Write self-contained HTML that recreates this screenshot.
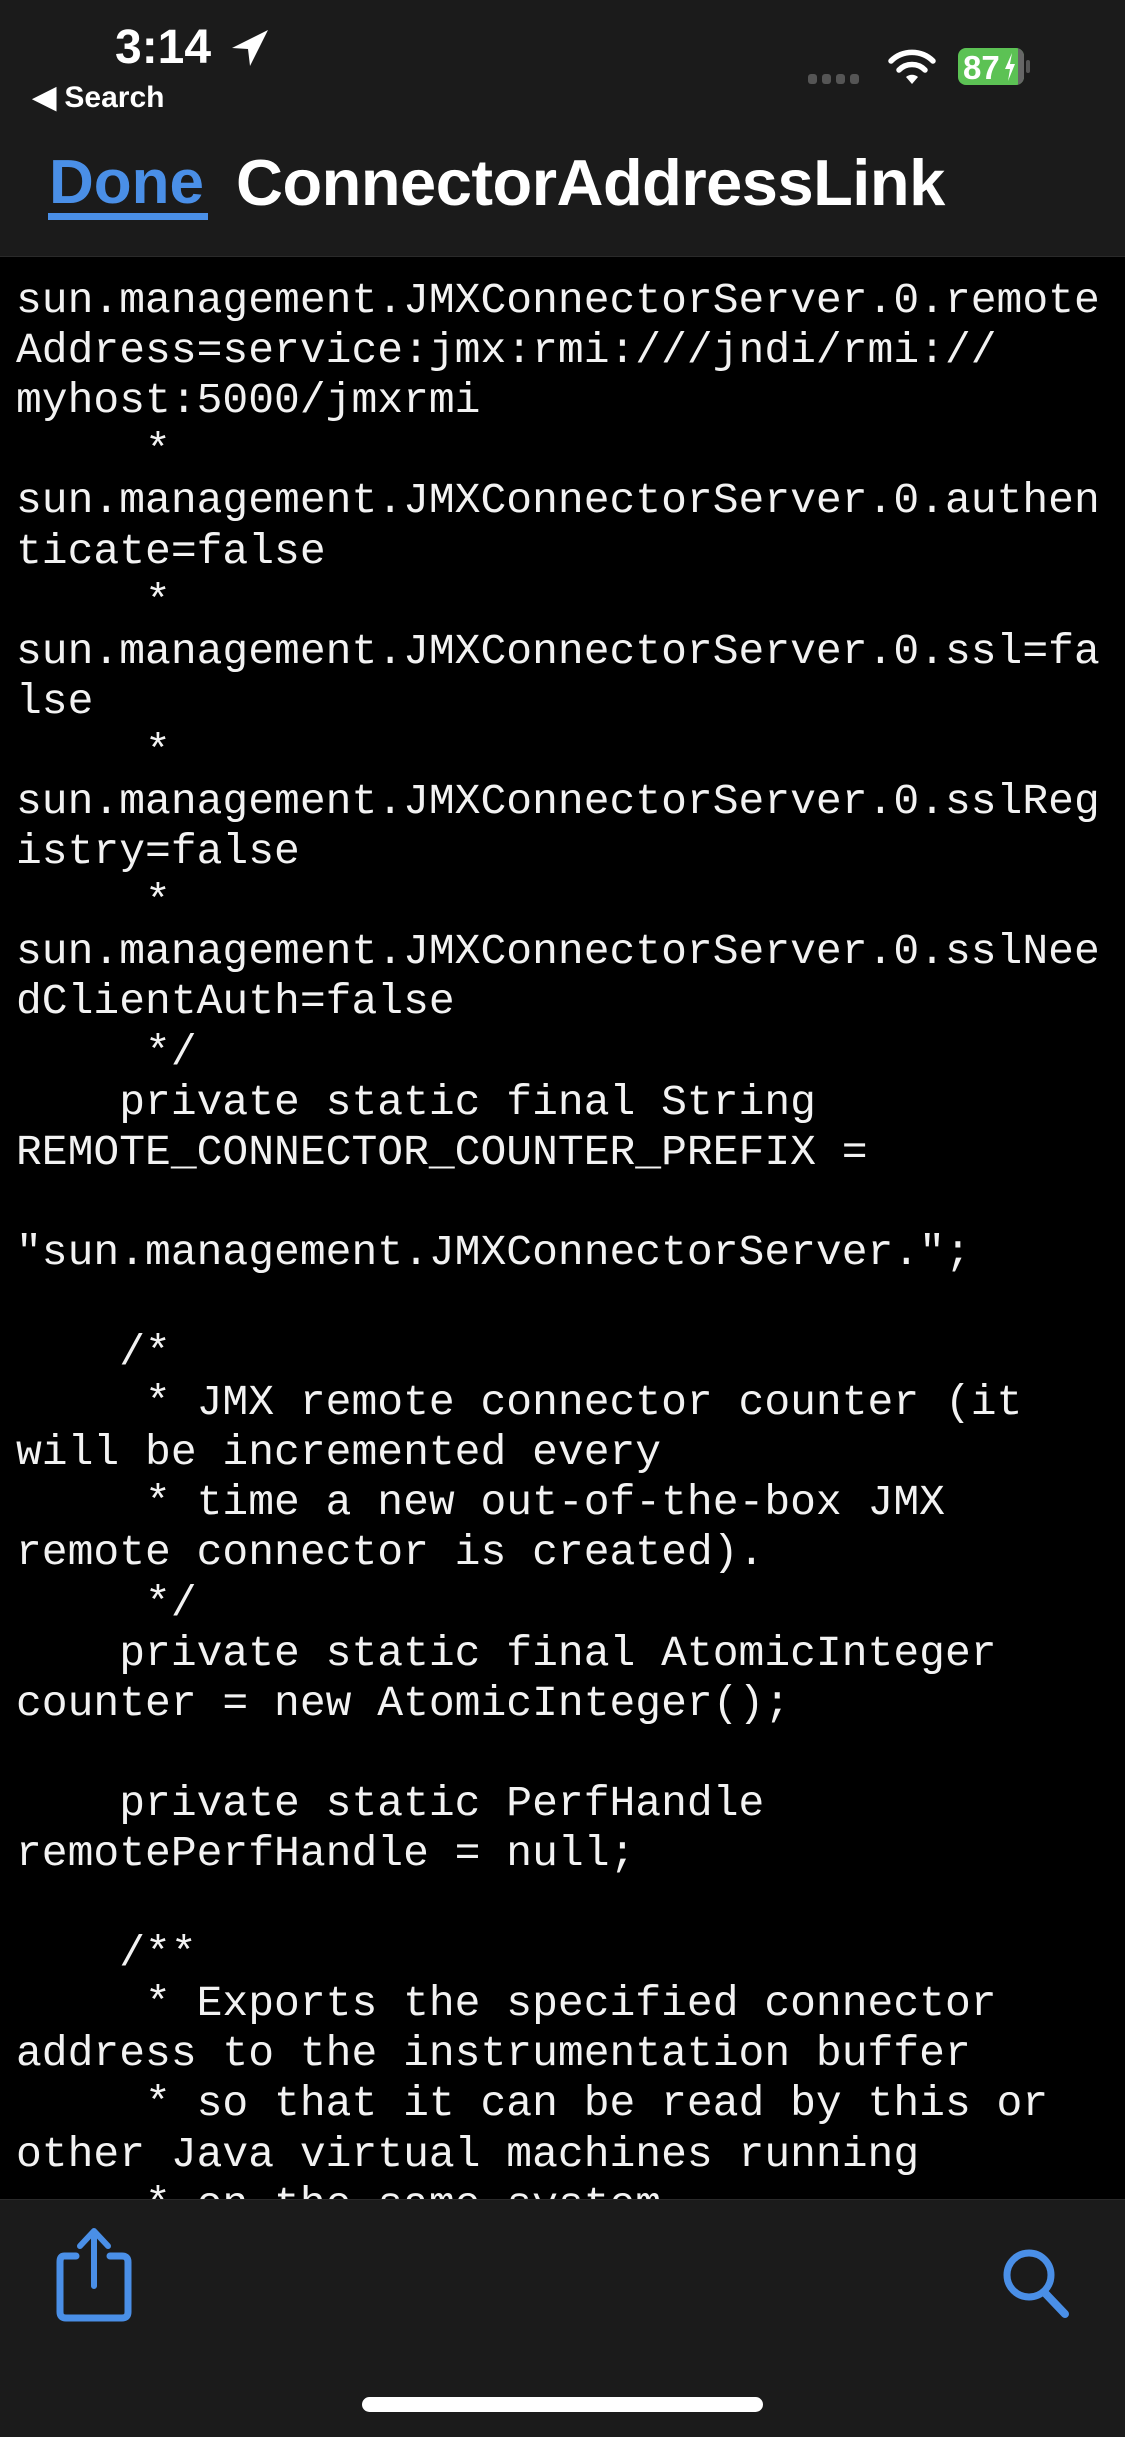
<!DOCTYPE html>
<html><head><meta charset="utf-8">
<style>
html,body{margin:0;padding:0;background:#000;}
body{width:1125px;height:2436px;position:relative;overflow:hidden;font-family:"Liberation Sans",sans-serif;}
#code{position:absolute;left:16px;top:226px;margin:0;font-family:"Liberation Mono",monospace;font-size:43px;line-height:50.1px;color:#f2f2f2;white-space:pre;}
#nav{position:absolute;left:0;top:0;width:1125px;height:256px;background:#1b1b1b;border-bottom:1px solid #2a2a2a;}
#tb{position:absolute;left:0;top:2199px;width:1125px;height:237px;background:#1b1b1b;border-top:1px solid #2a2a2a;}
.time{position:absolute;left:115px;top:20px;font-size:48px;font-weight:bold;color:#fff;}
.search{position:absolute;left:33px;top:80px;font-size:30px;font-weight:bold;color:#fff;}
.done{position:absolute;left:49px;top:147px;font-size:62px;font-weight:bold;color:#4a8fe7;}
.uline{position:absolute;left:48px;top:213px;width:160px;height:7px;background:#4a8fe7;}
.title{position:absolute;left:236px;top:145px;font-size:65px;font-weight:bold;color:#fff;letter-spacing:-0.5px;}
.home{position:absolute;left:362px;top:2397px;width:401px;height:15px;border-radius:8px;background:#fff;}
</style></head><body>
<pre id="code">     *
sun.management.JMXConnectorServer.0.remote
Address=service:jmx:rmi:///jndi/rmi://
myhost:5000/jmxrmi
     *
sun.management.JMXConnectorServer.0.authen
ticate=false
     *
sun.management.JMXConnectorServer.0.ssl=fa
lse
     *
sun.management.JMXConnectorServer.0.sslReg
istry=false
     *
sun.management.JMXConnectorServer.0.sslNee
dClientAuth=false
     */
    private static final String
REMOTE_CONNECTOR_COUNTER_PREFIX =

"sun.management.JMXConnectorServer.";

    /*
     * JMX remote connector counter (it
will be incremented every
     * time a new out-of-the-box JMX
remote connector is created).
     */
    private static final AtomicInteger
counter = new AtomicInteger();

    private static PerfHandle
remotePerfHandle = null;

    /**
     * Exports the specified connector
address to the instrumentation buffer
     * so that it can be read by this or
other Java virtual machines running
     * on the same system.</pre>
<div id="nav">
  <div class="time">3:14</div>
  <svg style="position:absolute;left:228px;top:28px" width="44" height="40" viewBox="0 0 44 40"><path d="M40 2 L4 20 L20 21 L22 38 Z" fill="#fff"/></svg>
  <div class="search">&#9664;&#xFE0E; <span style="font-size:30px">Search</span></div>
  <svg style="position:absolute;left:808px;top:72px" width="56" height="14"><g fill="#555"><rect x="0" y="2" width="9" height="10" rx="3"/><rect x="14" y="2" width="9" height="10" rx="3"/><rect x="28" y="2" width="9" height="10" rx="3"/><rect x="42" y="2" width="9" height="10" rx="3"/></g></svg>
  <svg style="position:absolute;left:886px;top:46px" width="52" height="40" viewBox="0 0 52 40"><path d="M26 38 L20 31 A9 9 0 0 1 32 31 Z" fill="#fff"/><path d="M13 24 A18 18 0 0 1 39 24" stroke="#fff" stroke-width="5.5" fill="none" stroke-linecap="round"/><path d="M5 15 A30 30 0 0 1 47 15" stroke="#fff" stroke-width="5.5" fill="none" stroke-linecap="round"/></svg>
  <div style="position:absolute;left:958px;top:48px;width:66px;height:37px;border-radius:8px;background:#5cc254;overflow:hidden"><div style="position:absolute;right:0;top:0;width:6px;height:37px;background:#666"></div><span style="position:absolute;left:5px;top:1px;font-size:33px;font-weight:bold;color:#fff">87</span><svg style="position:absolute;left:46px;top:5px" width="12" height="28" viewBox="0 0 12 28"><path d="M8 0 L1 16 L6 16 L4 28 L11 11 L6 11 Z" fill="#fff"/></svg></div>
  <div style="position:absolute;left:1026px;top:60px;width:4px;height:13px;border-radius:2px;background:#555"></div>
  <div class="done">Done</div>
  <div class="uline"></div>
  <div class="title">ConnectorAddressLink</div>
</div>
<div id="tb">
  <svg style="position:absolute;left:54px;top:26px" width="80" height="96" viewBox="0 0 80 96"><path d="M22 30 L10 30 Q6 30 6 36 L6 86 Q6 92 12 92 L68 92 Q74 92 74 86 L74 36 Q74 30 68 30 L56 30" stroke="#4a8fe7" stroke-width="7" fill="none" stroke-linecap="round"/><path d="M40 60 L40 6 M26 20 L40 5 L54 20" stroke="#4a8fe7" stroke-width="6" fill="none" stroke-linecap="round" stroke-linejoin="round"/></svg>
  <svg style="position:absolute;left:1000px;top:46px" width="74" height="74" viewBox="0 0 74 74"><circle cx="29" cy="29" r="22" stroke="#4a8fe7" stroke-width="7" fill="none"/><path d="M45 47 L65 68" stroke="#4a8fe7" stroke-width="8" stroke-linecap="round"/></svg>
</div>
<div class="home"></div>
</body></html>
